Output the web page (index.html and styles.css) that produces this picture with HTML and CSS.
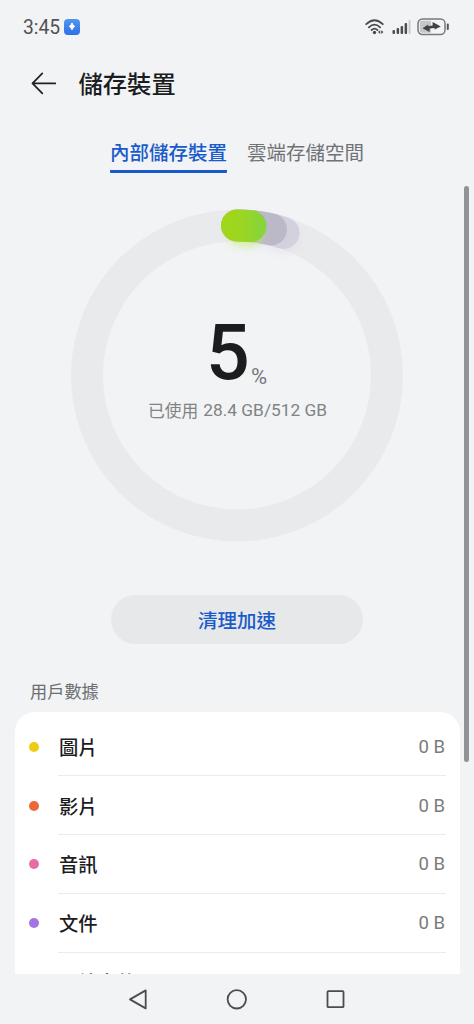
FILE: index.html
```html
<!DOCTYPE html>
<html lang="zh-Hant">
<head>
<meta charset="utf-8">
<title>儲存裝置</title>
<link rel="stylesheet" href="styles.css">
</head>
<body>
<div class="screen">
  <header class="status">
    <span class="clock">3:45</span>
    <svg class="app-badge" width="16" height="16" viewBox="0 0 16 16"><defs><linearGradient id="badge" x1="0" y1="0" x2="0" y2="1"><stop offset="0" stop-color="#5295f0"/><stop offset="1" stop-color="#2f70e6"/></linearGradient></defs><rect width="16" height="16" rx="4" fill="url(#badge)"/><path d="M8 4 Q8.6 6.6 10.8 7.4 Q8.6 8.2 8 10.8 Q7.4 8.2 5.2 7.4 Q7.4 6.6 8 4Z" fill="#fff" stroke="#fff" stroke-width="1"/></svg>
    <svg class="wifi" width="20" height="18" viewBox="0 0 20 18" fill="none" stroke="#4a4c4f" stroke-width="1.8" stroke-linecap="round"><path d="M1.2 6.2 Q9.5 -1.8 17.8 6.2"/><path d="M3.9 9.3 Q9.5 3.9 15.1 9.3"/><path d="M6.6 12 Q9.5 9.2 12.4 12"/><circle cx="9.5" cy="14.5" r="1.7" fill="#4a4c4f" stroke="none"/><path d="M15.2 12.2 L12.9 14.1 L15.2 16Z M16.2 12.2 L18.5 14.1 L16.2 16Z" fill="#4a4c4f" stroke="none"/></svg>
    <svg class="signal" width="19" height="16" viewBox="0 0 19 16" fill="#4a4c4f"><rect x=".5" y="11" width="2.5" height="4" rx="1"/><rect x="4.6" y="9" width="2.5" height="6" rx="1"/><rect x="8.6" y="7" width="2.5" height="8" rx="1"/><rect x="12.6" y="4" width="2.5" height="11" rx="1"/><rect x="16.6" y="1" width="1.9" height="14" rx=".9" fill="#c7c8ca"/></svg>
    <svg class="battery" width="33" height="18" viewBox="0 0 33 18"><rect x="1" y="1" width="27" height="15.6" rx="4.5" fill="#f2f3f5" stroke="#77797c" stroke-width="1.5"/><path d="M5.2 2.8 H14 V14.8 H5.2 Q2.8 14.8 2.8 12.4 V5.2 Q2.8 2.8 5.2 2.8Z" fill="#c6c7c9"/><rect x="29.8" y="5.5" width="2" height="6.5" rx="1" fill="#55575a"/><path d="M5.5 10.2 L11.2 6.4 V8.3 L15.6 7.4 V4 L23.8 8.6 L17.6 11.6 V9.9 L12.6 10.6 V14 Z" fill="#404245"/></svg>
  </header>
  <div class="titlebar">
    <svg width="26" height="24" viewBox="0 0 26 24" fill="none" stroke="#202124" stroke-width="1.7" stroke-linecap="round" stroke-linejoin="round"><path d="M24.3 12.4 H1.5 M11.3 2.4 L1.5 12.4 L11.3 22.4"/></svg>
    <h1 class="title">儲存裝置</h1>
  </div>
  <nav class="tabs">
    <span class="tab tab-active">內部儲存裝置</span>
    <span class="tab">雲端存儲空間</span>
  </nav>
  <main class="content">
    <section class="gauge">
      <svg class="ring" width="350" height="350" viewBox="0 0 350 350" fill="none">
        <defs>
          <linearGradient id="green" gradientUnits="userSpaceOnUse" x1="159" y1="0" x2="205" y2="0"><stop offset="0" stop-color="#a2d719"/><stop offset=".45" stop-color="#9bd620"/><stop offset="1" stop-color="#83d341"/></linearGradient>
          <filter id="glow" filterUnits="userSpaceOnUse" x="130" y="0" width="140" height="90"><feGaussianBlur stdDeviation="4"/></filter>
        </defs>
        <circle cx="175" cy="175.5" r="150" stroke="#e9eaec" stroke-width="32"/>
        <g stroke-width="32" stroke-linecap="round">
          <path d="M193 30 A150 150 0 0 1 222 38" stroke="#d8d4e8" stroke-width="30" opacity=".35" filter="url(#glow)"/>
          <path d="M175 25.5 A150 150 0 0 1 221.5 32.9" stroke="#d4d1de"/>
          <path d="M175 25.5 A150 150 0 0 1 209 29.4" stroke="#bbb8c8"/>
          <path d="M178 33 A150 150 0 0 1 188 34" stroke="#c2eb67" stroke-width="25" opacity=".6" filter="url(#glow)"/>
          <path d="M175 25.5 A150 150 0 0 1 188.5 26.1" stroke="url(#green)"/>
        </g>
      </svg>
      <div class="reading">
        <div class="percent"><span class="value">5</span><span class="unit">%</span></div>
        <div class="usage"><span>已使用</span><span class="amount">28.4 GB/512 GB</span></div>
      </div>
    </section>
    <button class="clean">清理加速</button>
    <h2 class="section">用戶數據</h2>
    <ul class="list">
      <li class="row"><i class="dot yellow"></i><div class="line"><span>圖片</span><span class="size">0 B</span></div></li>
      <li class="row"><i class="dot orange"></i><div class="line"><span>影片</span><span class="size">0 B</span></div></li>
      <li class="row"><i class="dot pink"></i><div class="line"><span>音訊</span><span class="size">0 B</span></div></li>
      <li class="row"><i class="dot purple"></i><div class="line"><span>文件</span><span class="size">0 B</span></div></li>
      <li class="row"><i class="dot"></i><div class="line"><span>壓縮文件</span></div></li>
    </ul>
    <div class="scrollbar"></div>
  </main>
  <footer class="navbar">
    <svg width="22" height="22" viewBox="0 0 22 22" fill="none" stroke="#4b4c50" stroke-width="1.8" stroke-linejoin="round"><path d="M18.7 2.4 V20.4 L3 11.4Z"/></svg>
    <svg width="22" height="22" viewBox="0 0 22 22" fill="none" stroke="#4b4c50" stroke-width="1.8"><circle cx="10.8" cy="11.3" r="9.2"/></svg>
    <svg width="22" height="22" viewBox="0 0 22 22" fill="none" stroke="#4b4c50" stroke-width="1.8"><rect x="2.5" y="3.2" width="16" height="16" rx=".8"/></svg>
  </footer>
</div>
</body>
</html>
```
FILE: styles.css
```css
* { box-sizing: border-box; }
body {
  margin: 0;
  background: #f1f3f5;
  color: #1b1c1e;
  font-family: "Noto Sans CJK TC", sans-serif;
}
.screen {
  width: 474px;
  height: 1024px;
  display: flex;
  flex-direction: column;
  overflow: hidden;
}
.status {
  height: 54px;
  flex: none;
  display: flex;
  align-items: center;
  padding: 0 24px 0 23px;
}
.clock {
  width: 41px;
  font-family: Roboto, sans-serif;
  font-size: 19.3px;
  color: #505255;
}
.wifi { margin-left: auto; }
.signal { margin-left: 7px; }
.battery { margin-left: 6px; }
.titlebar {
  height: 58px;
  flex: none;
  display: flex;
  align-items: center;
  gap: 21.5px;
  padding-left: 31px;
}
.title {
  margin: 0;
  font-size: 24.3px;
  font-weight: 500;
  line-height: 36px;
}
.tabs {
  height: 61px;
  flex: none;
  display: flex;
  gap: 20px;
  padding: 25px 0 0 110px;
}
.tab {
  height: 36px;
  font-size: 19.5px;
  line-height: 30px;
  color: #707275;
}
.tab-active {
  color: #1a5bcb;
  font-weight: 500;
  border-bottom: 3px solid #1a5bcb;
  border-radius: 1px;
}
.content {
  position: relative;
  height: 801px;
  flex: none;
  overflow: hidden;
  padding: 27px 14px 0 15px;
}
.gauge {
  display: grid;
  width: 350px;
  height: 350px;
  margin-left: 47px;
}
.ring, .reading { grid-area: 1 / 1; }
.reading { padding-top: 111px; }
.percent {
  height: 84px;
  display: flex;
  align-items: baseline;
  padding-left: 144px;
}
.value {
  width: 45px;
  font-family: Roboto, sans-serif;
  font-size: 77px;
  font-weight: 500;
  line-height: 84px;
}
.unit {
  position: relative;
  top: 5px;
  font-family: Roboto, sans-serif;
  font-size: 22px;
  color: #77797b;
}
.usage {
  display: flex;
  gap: 5px;
  padding-left: 86px;
  margin-top: 2px;
  font-size: 16.8px;
  line-height: 26px;
  color: #808284;
  white-space: nowrap;
}
.amount {
  font-family: Roboto, sans-serif;
  font-size: 17.3px;
}
.clean {
  display: block;
  width: 252px;
  height: 49px;
  margin: 45px 0 0 96px;
  padding: 0;
  border: 0;
  border-radius: 25px;
  background: #e7e8ea;
  color: #1a5bcb;
  font: 500 19.5px/48px "Noto Sans CJK TC", sans-serif;
}
.section {
  margin: 34px 0 8px 15px;
  font-size: 17.2px;
  font-weight: 400;
  line-height: 26px;
  color: #6c6e71;
}
.list {
  margin: 0;
  padding: 5.5px 14px 0;
  list-style: none;
  border-radius: 20px 20px 0 0;
  background: #fff;
}
.row {
  display: flex;
  align-items: center;
  gap: 19px;
  height: 58.8px;
}
.dot {
  width: 10px;
  height: 10px;
  margin-right: 1px;
  border-radius: 50%;
  flex: none;
}
.yellow { background: #edcc13; }
.orange { background: #ed663c; }
.pink { background: #e56fa5; }
.purple { background: #a176e3; }
.line {
  flex: 1;
  display: flex;
  justify-content: space-between;
  align-items: center;
  height: 100%;
  margin-left: -1px;
  padding: 1px 1px 0;
  border-bottom: 1px solid #ebebed;
  font-size: 19.3px;
  font-weight: 500;
}
.size {
  font-family: Roboto, sans-serif;
  font-size: 18.5px;
  font-weight: 400;
  color: #797b7d;
}
.scrollbar {
  position: absolute;
  top: 13px;
  right: 5px;
  width: 5px;
  height: 576px;
  border-radius: 3px;
  background: #929396;
}
.navbar {
  height: 50px;
  flex: none;
  display: flex;
  align-items: center;
  justify-content: center;
  gap: 77px;
  background: #f1f3f5;
}
```
